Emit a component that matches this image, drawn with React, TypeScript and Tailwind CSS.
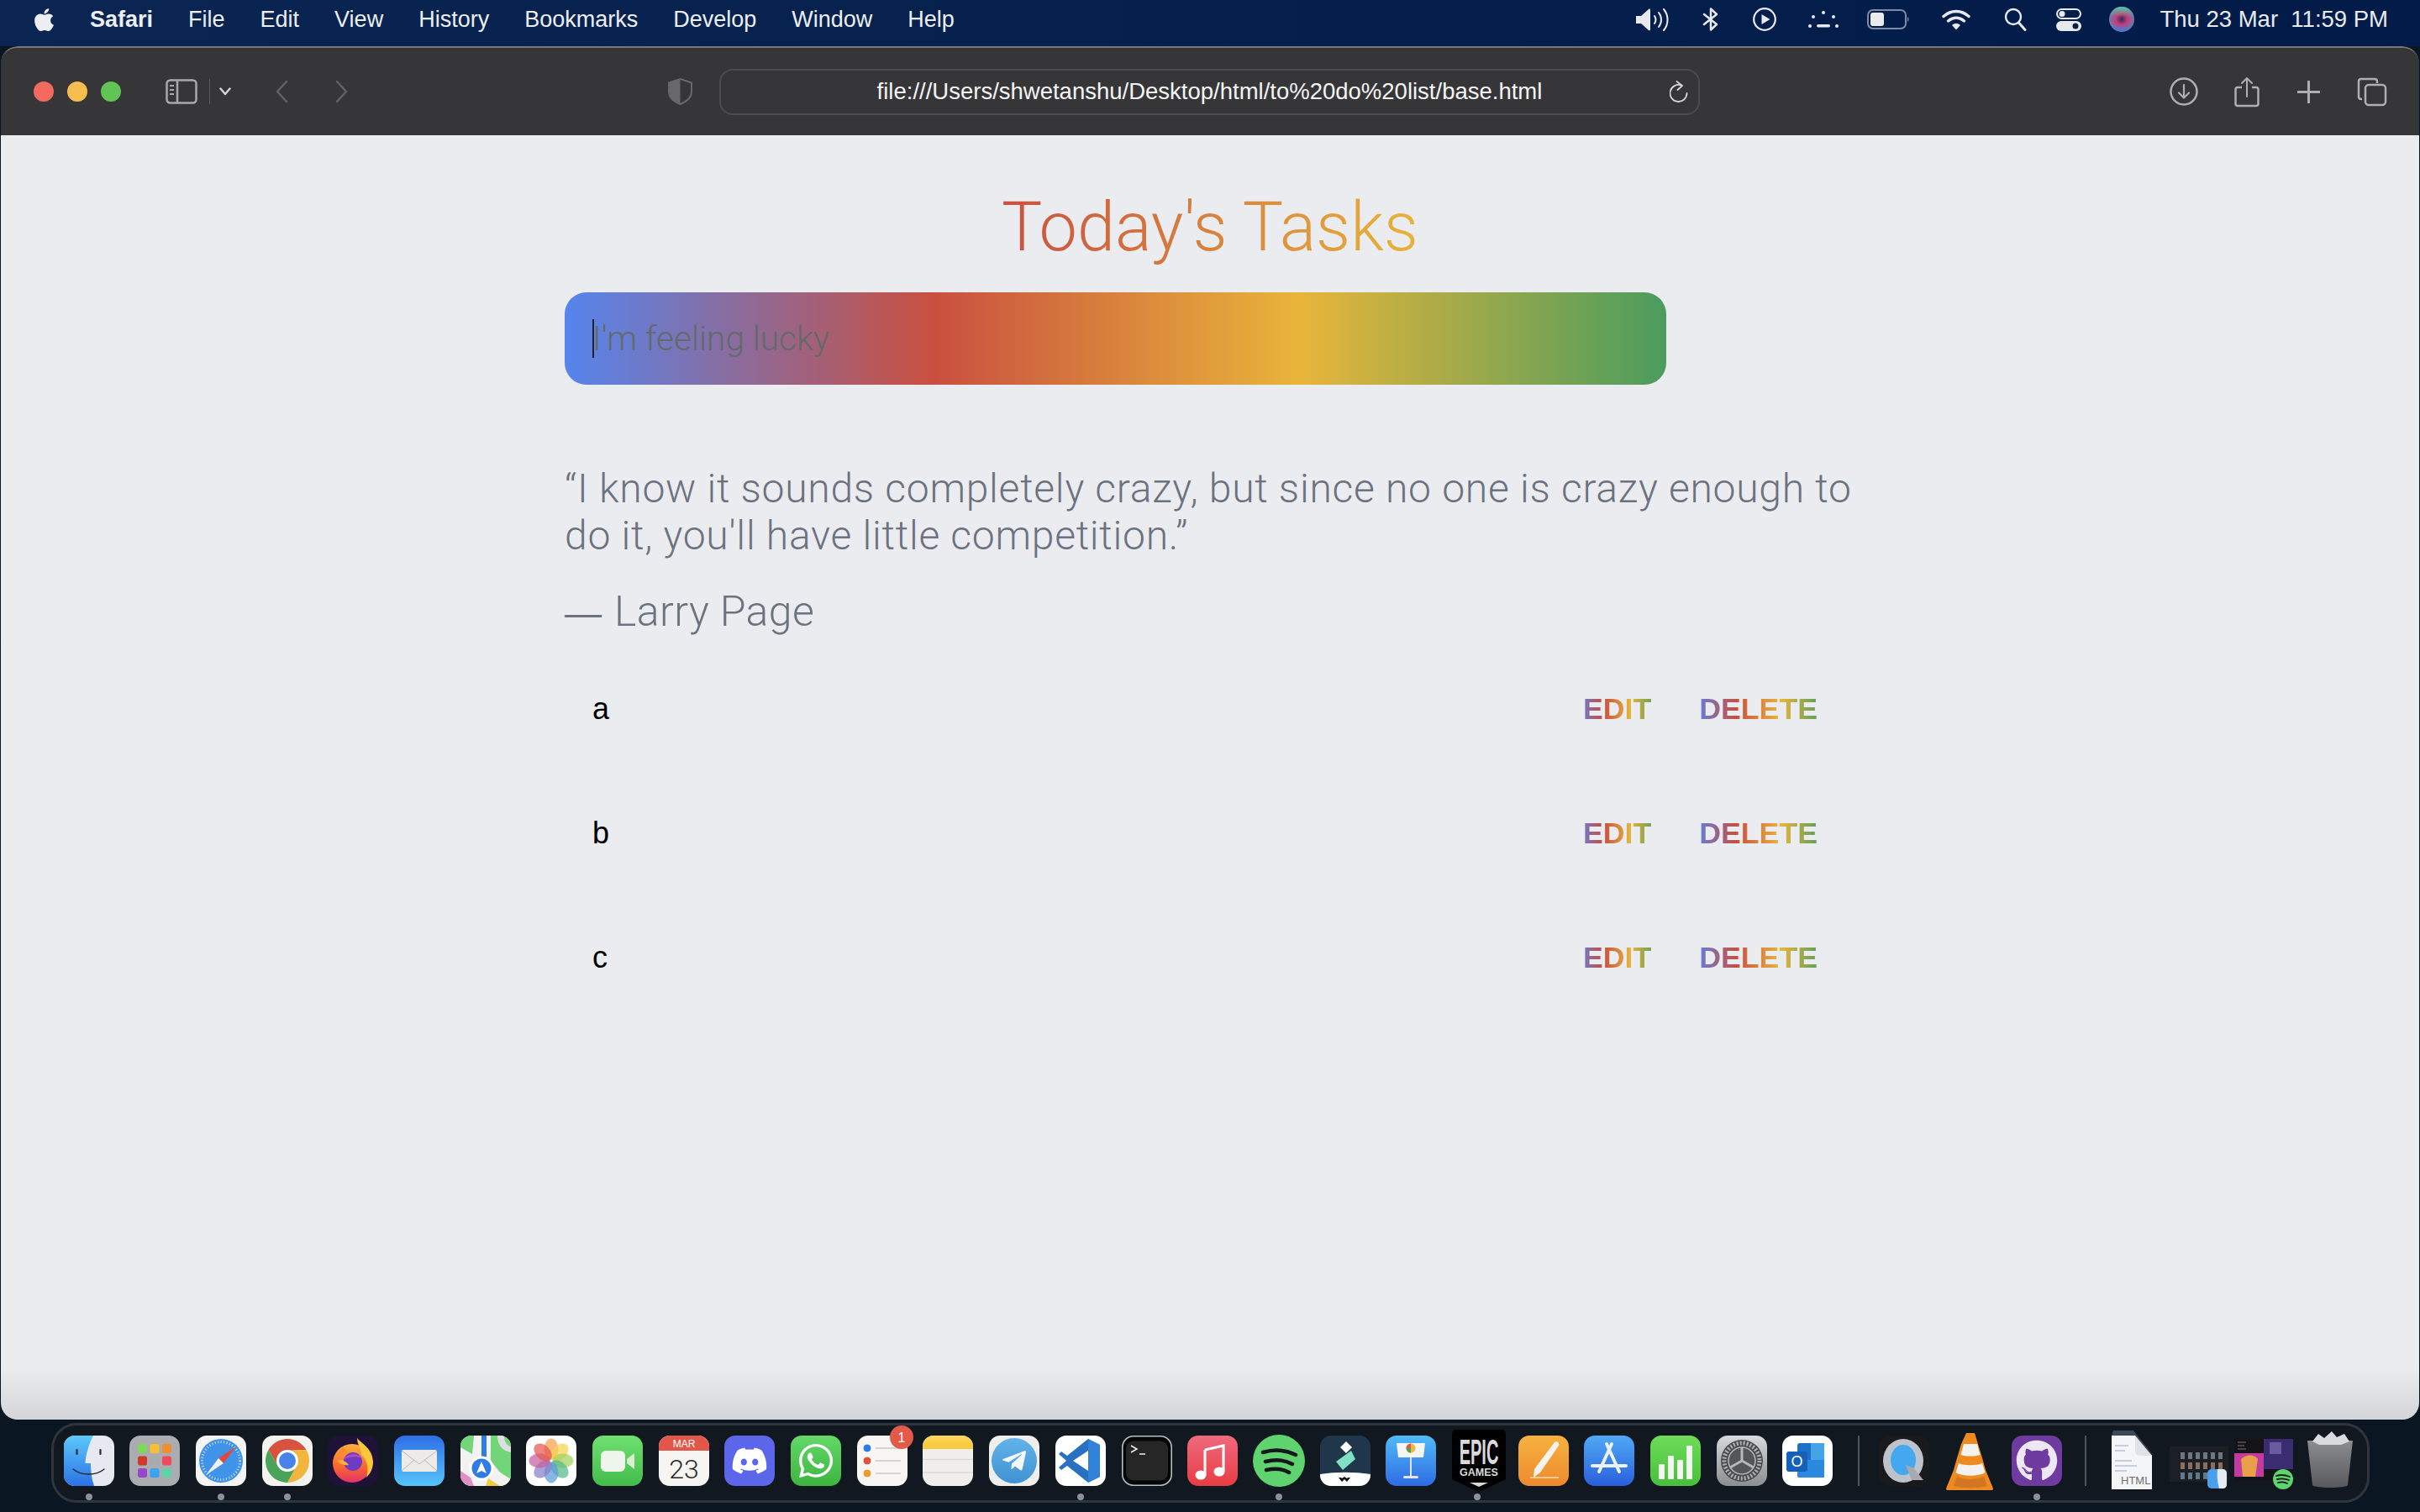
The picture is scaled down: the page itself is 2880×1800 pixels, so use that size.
import { FaApple, FaDiscord, FaGithub, FaTelegramPlane, FaWhatsapp } from "react-icons/fa";

const rainbow = "bg-[linear-gradient(to_right,#5585ee,#c94f40,#e8b53a,#4a9c5e)]";

const menuItems = ["File", "Edit", "View", "History", "Bookmarks", "Develop", "Window", "Help"];
const tasks = ["a", "b", "c"];

function StatusIcons() {
  return (
    <div className="flex items-center text-[#e8eaee]">
      <svg width="39" height="27" viewBox="0 0 39 27" className="mr-[40px]">
        <path d="M0 9h6l9-8c1-1 2 0 2 1v23c0 1-1 2-2 1l-9-8H0z" fill="#e8eaee" />
        <path d="M22 9c2 3 2 6 0 9M27 5c4 5 4 12 0 17M33 1c6 7 6 18 0 25" fill="none" stroke="#e8eaee" strokeWidth="2" strokeLinecap="round" />
      </svg>
      <svg width="19" height="28" viewBox="0 0 19 28" className="mr-[41px]">
        <path d="M2 8l15 12-7 6.500V1.500l7 6.500L2 20" fill="none" stroke="#e8eaee" strokeWidth="2.500" strokeLinecap="round" strokeLinejoin="round" />
      </svg>
      <svg width="28" height="28" viewBox="0 0 28 28" className="mr-[38px]">
        <circle cx="14" cy="14" r="12.800" fill="none" stroke="#e8eaee" strokeWidth="2.200" />
        <path d="M10.500 8l10 6-10 6z" fill="#e8eaee" />
      </svg>
      <svg width="36" height="20" viewBox="0 0 36 20" className="mr-[34px]">
        <circle cx="18" cy="2" r="2" fill="#e8eaee" />
        <circle cx="6" cy="7" r="2" fill="#e8eaee" />
        <circle cx="30" cy="7" r="2" fill="#e8eaee" />
        <circle cx="2" cy="18" r="2" fill="#e8eaee" />
        <circle cx="34" cy="18" r="2" fill="#e8eaee" />
        <rect x="10" y="16" width="16" height="3.500" rx="1.700" fill="#e8eaee" />
      </svg>
      <svg width="50" height="24" viewBox="0 0 50 24" className="mr-[39px]">
        <rect x="1" y="1" width="45" height="22" rx="6" fill="none" stroke="#7f8ba3" strokeWidth="2" />
        <rect x="4" y="4" width="16" height="16" rx="3" fill="#e8eaee" />
        <path d="M48 9c2 1 2 5 0 6z" fill="#7f8ba3" />
      </svg>
      <svg width="34" height="25" viewBox="0 0 34 25" className="mr-[40px]">
        <path d="M2 8.500c9-8 21-8 30 0M7.500 14c6-5 13-5 19 0" fill="none" stroke="#e8eaee" strokeWidth="3.400" strokeLinecap="round" />
        <path d="M12 19c3-2.600 7-2.600 10 0l-5 5.500z" fill="#e8eaee" />
      </svg>
      <svg width="27" height="28" viewBox="0 0 27 28" className="mr-[35px]">
        <circle cx="11" cy="11" r="9" fill="none" stroke="#e8eaee" strokeWidth="2.400" />
        <path d="M17.500 18l7.500 8.500" stroke="#e8eaee" strokeWidth="3" strokeLinecap="round" />
      </svg>
      <svg width="30" height="27" viewBox="0 0 30 27" className="mr-[33px]">
        <rect x="1" y="1" width="28" height="11" rx="5.500" fill="none" stroke="#e8eaee" strokeWidth="2" />
        <circle cx="7" cy="6.500" r="3.500" fill="#e8eaee" />
        <rect y="15" width="30" height="12" rx="6" fill="#e8eaee" />
        <circle cx="23" cy="21" r="3.500" fill="#0a2049" />
      </svg>
      <svg width="30" height="30" viewBox="0 0 30 30" className="mr-[30px]">
        <defs>
          <radialGradient id="siri" cx="0.5" cy="0.5" r="0.5">
            <stop offset="0" stopColor="#2c2f5e" />
            <stop offset="0.45" stopColor="#c93a78" />
            <stop offset="1" stopColor="#6b7fa8" />
          </radialGradient>
          <linearGradient id="sirib" x1="0" y1="0" x2="0" y2="1">
            <stop offset="0" stopColor="#58c9a2" stopOpacity="0.9" />
            <stop offset="0.4" stopColor="#58c9a2" stopOpacity="0" />
            <stop offset="0.7" stopColor="#3a7be0" stopOpacity="0" />
            <stop offset="1" stopColor="#3a7be0" stopOpacity="0.9" />
          </linearGradient>
        </defs>
        <circle cx="15" cy="15" r="15" fill="url(#siri)" />
        <circle cx="15" cy="15" r="15" fill="url(#sirib)" />
      </svg>
      <span className="whitespace-pre text-[27.500px] leading-none">Thu 23 Mar  11:59 PM</span>
    </div>
  );
}

function MenuBar() {
  return (
    <header className="flex h-[55px] items-center justify-between bg-linear-to-r from-[#0a2551] to-[#021b49] pb-[9px] pl-[39px] pr-[38px] text-[27px] text-[#eceef2]">
      <nav className="flex items-center">
        <FaApple className="mr-[41px] h-[31px] w-[27px] text-[#eceef2]" />
        <span className="mr-[42px] font-bold">Safari</span>
        <div className="flex gap-[42px]">
          {menuItems.map((item) => (
            <span key={item}>{item}</span>
          ))}
        </div>
      </nav>
      <StatusIcons />
    </header>
  );
}

function Toolbar() {
  return (
    <div className="flex h-[106px] items-center rounded-t-[20px] border-t-2 border-[#777779] bg-[#363638] pl-[39px]">
      <div className="flex gap-[16px]">
        <span className="size-[24px] rounded-full bg-[#f46a5e]" />
        <span className="size-[24px] rounded-full bg-[#f6be4f]" />
        <span className="size-[24px] rounded-full bg-[#61c555]" />
      </div>
      <svg width="38" height="30" viewBox="0 0 38 30" className="ml-[53px]">
        <rect x="1.500" y="1.500" width="35" height="27" rx="4" fill="none" stroke="#a9a9aa" strokeWidth="2.500" />
        <path d="M14 2v26" stroke="#a9a9aa" strokeWidth="2.500" />
        <path d="M5 8h5M5 13h5M5 18h5" stroke="#a9a9aa" strokeWidth="2" />
      </svg>
      <span className="ml-[14px] h-[30px] w-[1px] bg-[#58585a]" />
      <svg width="14" height="10" viewBox="0 0 14 10" className="ml-[11px]">
        <path d="M1.500 1.500L7 8l5.500-6.500" fill="none" stroke="#d2d2d3" strokeWidth="2.500" strokeLinecap="round" strokeLinejoin="round" />
      </svg>
      <svg width="16" height="28" viewBox="0 0 16 28" className="ml-[52px]">
        <path d="M14 2L3 14l11 12" fill="none" stroke="#626264" strokeWidth="2.500" strokeLinecap="round" strokeLinejoin="round" />
      </svg>
      <svg width="16" height="28" viewBox="0 0 16 28" className="ml-[56px]">
        <path d="M2 2l11 12L2 26" fill="none" stroke="#626264" strokeWidth="2.500" strokeLinecap="round" strokeLinejoin="round" />
      </svg>
      <svg width="29" height="32" viewBox="0 0 29 32" className="ml-[380px]">
        <path d="M14.500 1L28 5.500V16c0 7-6 12-13.500 15C7 28 1 23 1 16V5.500z" fill="none" stroke="#68686a" strokeWidth="2" />
        <path d="M14.500 1L1 5.500V16c0 7 6 12 13.500 15z" fill="#68686a" />
      </svg>
      <div className="relative ml-[32px] flex h-[55px] w-[1167px] items-center justify-center rounded-[16px] border-2 border-[#4c4c4e] text-[27.500px] text-[#f4f4f4]">
        file:///Users/shwetanshu/Desktop/html/to%20do%20list/base.html
        <svg width="22" height="26" viewBox="0 0 22 26" className="absolute right-[12px] top-[12px]">
          <path d="M20.500 15A10 10 0 1 1 14 5.600" fill="none" stroke="#d5d5d6" strokeWidth="1.800" strokeLinecap="round" />
          <path d="M8.500 1L15 6l-5.500 5" fill="none" stroke="#d5d5d6" strokeWidth="1.800" strokeLinecap="round" strokeLinejoin="round" />
        </svg>
      </div>
      <svg width="34" height="34" viewBox="0 0 34 34" className="ml-[559px]">
        <circle cx="17" cy="17" r="15.500" fill="none" stroke="#afafb0" strokeWidth="2.500" />
        <path d="M17 9v15M11 18.500l6 6 6-6" fill="none" stroke="#afafb0" strokeWidth="2.200" strokeLinecap="round" strokeLinejoin="round" />
      </svg>
      <svg width="30" height="37" viewBox="0 0 30 37" className="ml-[43px]">
        <path d="M9 13H4c-1.500 0-2.500 1-2.500 2.500v17c0 1.500 1 2.500 2.500 2.500h22c1.500 0 2.500-1 2.500-2.500v-17c0-1.500-1-2.500-2.500-2.500h-5" fill="none" stroke="#afafb0" strokeWidth="2.500" />
        <path d="M15 24V2M9 8l6-6 6 6" fill="none" stroke="#afafb0" strokeWidth="2" strokeLinecap="round" strokeLinejoin="round" />
      </svg>
      <svg width="27" height="27" viewBox="0 0 27 27" className="ml-[45px]">
        <path d="M13.500 1v25M1 13.500h25" stroke="#afafb0" strokeWidth="3" strokeLinecap="round" />
      </svg>
      <svg width="36" height="35" viewBox="0 0 36 35" className="ml-[44px]">
        <path d="M6 26H5c-2 0-3-1-3-3V5c0-2 1-3 3-3h16c2 0 3 1 3 3v2" fill="none" stroke="#afafb0" strokeWidth="2.500" />
        <rect x="10" y="9" width="24" height="24" rx="4" fill="none" stroke="#afafb0" strokeWidth="2.500" />
      </svg>
    </div>
  );
}

function TaskRow({ label }: { label: string }) {
  return (
    <li className="flex h-[148px] items-center justify-between pl-[33px] pr-[37px]">
      <span className="text-[36px] leading-none text-black">{label}</span>
      <div className="flex gap-[41px] pt-[2px] text-[35.700px] font-bold">
        <button className={`${rainbow} bg-clip-text px-2 text-transparent`}>EDIT</button>
        <button className={`${rainbow} bg-clip-text px-2 text-transparent`}>DELETE</button>
      </div>
    </li>
  );
}

function TodoPage() {
  return (
    <main className="flex-1 bg-linear-to-b from-[#ebecf0] via-[#ebecf0] via-[96%] to-[#d4d5d8] pt-[61px]">
      <div className="mx-auto w-[1536px]">
        <h1 className={`${rainbow} bg-clip-text text-center font-['Roboto',sans-serif] text-[81px] font-light leading-[97px] text-transparent`}>
          Today's Tasks
        </h1>
        <div className="relative mt-[29px] w-[1311px]">
          <input
            readOnly
            placeholder="I'm feeling lucky"
            className={`${rainbow} h-[110px] w-full rounded-[26px] pl-[33px] font-['Roboto',sans-serif] text-[40.500px] font-light outline-none placeholder:text-[#626a6c]`}
          />
          <span className="absolute left-[33px] top-[32px] h-[46px] w-[2px] bg-[#20242a]" />
        </div>
        <blockquote className="mt-[96px] font-['Roboto',sans-serif] font-light text-[#6b7280]">
          <p className="text-[48px] leading-[56px] tracking-[0.730px]">
            “I know it sounds completely crazy, but since no one is crazy enough to
            <br />
            do it, you'll have little competition.”
          </p>
          <p className="mt-[34px] text-[50px] leading-[56px] tracking-[0.400px]">
            <span className="mr-[2px] font-['Liberation_Sans',sans-serif] text-[44px] font-normal">—</span> Larry Page
          </p>
        </blockquote>
        <ul className="mt-[12px]">
          {tasks.map((task) => (
            <TaskRow key={task} label={task} />
          ))}
        </ul>
      </div>
    </main>
  );
}

function AppTile({ children, dot, className = "w-[60px]" }: { children: React.ReactNode; dot?: boolean; className?: string }) {
  return (
    <div className={`relative h-[60px] shrink-0 ${className}`}>
      {children}
      {dot && <span className="absolute -bottom-[17px] left-1/2 size-[8px] -translate-x-1/2 rounded-full bg-[#8b909a]" />}
    </div>
  );
}

function Finder() {
  return (
    <svg viewBox="0 0 60 60" className="size-full">
      <defs>
        <linearGradient id="fb" x1="0" y1="0" x2="0" y2="1"><stop offset="0" stopColor="#5cc8fb" /><stop offset="1" stopColor="#2b72e6" /></linearGradient>
        <clipPath id="fc"><rect width="60" height="60" rx="13" /></clipPath>
      </defs>
      <g clipPath="url(#fc)">
        <rect width="60" height="60" fill="#e6e9ef" />
        <path d="M0 0h35c-5 10-9 22-9.500 33H32c0 9 1 19 4 27H0z" fill="url(#fb)" />
      </g>
      <path d="M15.500 17v5M43.500 17v5" stroke="#2a2a2e" strokeWidth="2.200" strokeLinecap="round" />
      <path d="M11 40c10 8 27 8 37 0" fill="none" stroke="#232428" strokeWidth="1.500" strokeLinecap="round" />
    </svg>
  );
}

function Launchpad() {
  const cells = ["#7ed957", "#f9bf34", "#ee8f2c", "#cf3a2a", "#a7abad", "#ef4b60", "#9648c8", "#3aa4f0", "#5fd3a8"];
  return (
    <svg viewBox="0 0 60 60" className="size-full">
      <rect width="60" height="60" rx="13" fill="#aaacaf" />
      {cells.map((c, i) => (
        <rect key={c} x={10 + (i % 3) * 14.500} y={10 + Math.floor(i / 3) * 14.500} width="11" height="11" rx="2.500" fill={c} />
      ))}
    </svg>
  );
}

function Safari() {
  return (
    <svg viewBox="0 0 60 60" className="size-full">
      <rect width="60" height="60" rx="13" fill="#f4f4f4" />
      <circle cx="30" cy="30" r="26" fill="#3f93e8" />
      <circle cx="30" cy="30" r="22.500" fill="none" stroke="#cfe3f8" strokeWidth="3" strokeDasharray="1 2.500" />
      <path d="M48 13L33 33 27 27z" fill="#e4463c" />
      <path d="M12 47L27 27 33 33z" fill="#f2f2f2" />
    </svg>
  );
}

function Chrome() {
  return (
    <svg viewBox="0 0 60 60" className="size-full">
      <rect width="60" height="60" rx="13" fill="#f2f2ef" />
      <path d="M7.500 17A26 26 0 0 1 52.500 17L30 18 19 37z" fill="#d8523f" />
      <path d="M52.500 17A26 26 0 0 1 30 56L41 36 30 18z" fill="#f2b63c" />
      <path d="M30 56A26 26 0 0 1 7.500 17L19 37 41 36z" fill="#4aa35a" />
      <circle cx="30" cy="30" r="13" fill="#fff" />
      <circle cx="30" cy="30" r="10" fill="#4783e8" />
    </svg>
  );
}

function Firefox() {
  return (
    <svg viewBox="0 0 60 60" className="size-full">
      <defs>
        <linearGradient id="ff" x1="0" y1="0" x2="0" y2="1"><stop offset="0" stopColor="#ffb13c" /><stop offset="0.6" stopColor="#f8662f" /><stop offset="1" stopColor="#e6306b" /></linearGradient>
      </defs>
      <rect width="60" height="60" rx="13" fill="#1f1238" />
      <circle cx="29" cy="33" r="23" fill="url(#ff)" />
      <path d="M35 3c4 6 18 11 19 28 0 8-3 14-8 19 3-10 2-20-6-27 0-8-5-12-5-20z" fill="#fcc63d" />
      <path d="M10 22c3-4 7-5 8-9 2 3 3 5 6 6-5 1-8 4-14 3z" fill="#fb8b2f" />
      <circle cx="30" cy="31" r="11" fill="#6d3bc2" />
      <path d="M19 28c5-7 17-8 22-1-7-3-15-2-22 1z" fill="#b14bc0" />
      <path d="M11 30c6-2 11 1 14 5-5 1-10-1-14-5z" fill="#ffb13c" />
    </svg>
  );
}

function Mail() {
  return (
    <svg viewBox="0 0 60 60" className="size-full">
      <defs>
        <linearGradient id="ml" x1="0" y1="0" x2="0" y2="1"><stop offset="0" stopColor="#2f6ee6" /><stop offset="1" stopColor="#56c5fb" /></linearGradient>
      </defs>
      <rect width="60" height="60" rx="13" fill="url(#ml)" />
      <rect x="9" y="17" width="42" height="26" rx="2" fill="#ecebe8" />
      <path d="M9 18l21 16 21-16M9 42l15-13M51 42L36 29" fill="none" stroke="#b9b8b6" strokeWidth="1" />
    </svg>
  );
}

function Maps() {
  return (
    <svg viewBox="0 0 60 60" className="size-full">
      <defs>
        <clipPath id="mp"><rect width="60" height="60" rx="13" /></clipPath>
      </defs>
      <g clipPath="url(#mp)">
        <rect width="60" height="60" fill="#f2f2f0" />
        <path d="M0 0h16L14 22 0 14z" fill="#72d57a" />
        <path d="M36 0h24v60L36 30z" fill="#72d57a" />
        <path d="M44 0c0 12 6 18 16 20v-7c-5-1-8-6-8-13z" fill="#dedfe0" />
        <path d="M22 28l38 24v8H36L20 44z" fill="#f2f2f0" />
        <path d="M0 42l12 8 4 10H0z" fill="#df90c4" />
        <path d="M30 60l3-9 14 9z" fill="#f4cb3f" />
        <path d="M25 0h6v30h-6z" fill="#2f7be8" />
      </g>
      <circle cx="25" cy="39" r="14.500" fill="#fff" />
      <circle cx="25" cy="39" r="11.500" fill="#2f7be8" />
      <path d="M25 31l6 14-6-3-6 3z" fill="#fff" />
    </svg>
  );
}

function Photos() {
  const petals = ["#f4a24b", "#f5d34e", "#a4d15d", "#58b98a", "#5a9bd8", "#8a7ec8", "#c45f9c", "#e6564f"];
  return (
    <svg viewBox="0 0 60 60" className="size-full">
      <rect width="60" height="60" rx="13" fill="#fff" />
      {petals.map((c, i) => (
        <ellipse key={c} cx="30" cy="16" rx="8.500" ry="12.500" fill={c} opacity="0.72" transform={`rotate(${i * 45} 30 30)`} />
      ))}
    </svg>
  );
}

function FaceTime() {
  return (
    <svg viewBox="0 0 60 60" className="size-full">
      <defs>
        <linearGradient id="ft" x1="0" y1="0" x2="0" y2="1"><stop offset="0" stopColor="#6fe06f" /><stop offset="1" stopColor="#42bc4c" /></linearGradient>
      </defs>
      <rect width="60" height="60" rx="13" fill="url(#ft)" />
      <rect x="10" y="18" width="29" height="25" rx="6" fill="#eef5ea" />
      <path d="M41 28l9-7v19l-9-7z" fill="#d8efd0" />
    </svg>
  );
}

function Calendar() {
  return (
    <svg viewBox="0 0 60 60" className="size-full">
      <defs>
        <clipPath id="cl"><rect width="60" height="60" rx="13" /></clipPath>
      </defs>
      <g clipPath="url(#cl)">
        <rect width="60" height="60" fill="#f6f5f2" />
        <rect width="60" height="18" fill="#e3574b" />
      </g>
      <text x="30" y="14" textAnchor="middle" fontSize="12" fill="#fff" fontFamily="'Liberation Sans',sans-serif">MAR</text>
      <text x="30" y="51" textAnchor="middle" fontSize="32" fill="#2a2a2a" fontFamily="'Roboto',sans-serif" fontWeight="300">23</text>
    </svg>
  );
}

function Reminders() {
  return (
    <svg viewBox="0 0 60 60" className="size-full overflow-visible">
      <rect width="60" height="60" rx="13" fill="#f7f6f3" />
      <circle cx="12" cy="15" r="5" fill="#2f7be8" stroke="#fff" />
      <circle cx="12" cy="30" r="5" fill="#e0503f" stroke="#fff" />
      <circle cx="12" cy="45" r="5" fill="#ee9a2f" stroke="#fff" />
      <path d="M22 15h30M22 30h30M22 45h30" stroke="#c9c9c7" strokeWidth="1.500" />
      <circle cx="53" cy="2" r="14" fill="#e45a48" />
      <text x="53" y="8" textAnchor="middle" fontSize="16" fill="#fff" fontFamily="'Liberation Sans',sans-serif">1</text>
    </svg>
  );
}

function Notes() {
  return (
    <svg viewBox="0 0 60 60" className="size-full">
      <defs>
        <clipPath id="nt"><rect width="60" height="60" rx="13" /></clipPath>
        <linearGradient id="ny" x1="0" y1="0" x2="0" y2="1"><stop offset="0" stopColor="#fcd75c" /><stop offset="1" stopColor="#f8c63a" /></linearGradient>
      </defs>
      <g clipPath="url(#nt)">
        <rect width="60" height="60" fill="#f0eeea" />
        <rect width="60" height="16" fill="url(#ny)" />
        <path d="M0 28.500h60M0 44h60" stroke="#dcdad5" strokeWidth="1.500" />
      </g>
    </svg>
  );
}

function Telegram() {
  return (
    <div className="relative size-full rounded-[13px] bg-[#eeeeec]">
      <span className="absolute inset-[3px] flex items-center justify-center rounded-full bg-linear-to-b from-[#63b3ea] to-[#3f92d2]">
        <FaTelegramPlane className="size-[32px] text-[#f4f7fa]" />
      </span>
    </div>
  );
}

function VsCode() {
  return (
    <svg viewBox="0 0 60 60" className="size-full">
      <rect width="60" height="60" rx="13" fill="#fff" />
      <path d="M39 4l14 7v38l-14 7-25-20-7 5-3-3 9-8-9-8 3-3 7 5z" fill="#2a70c0" />
      <path d="M39 18L21 30l18 12z" fill="#fff" />
      <path d="M39 4l14 7v38l-14 7z" fill="#2f82d8" />
    </svg>
  );
}

function Terminal() {
  return (
    <svg viewBox="0 0 60 60" className="size-full">
      <rect x="0.800" y="0.800" width="58.400" height="58.400" rx="13" fill="#050505" stroke="#b5c0c4" strokeWidth="1.600" />
      <rect x="5" y="6.500" width="50" height="47" rx="9" fill="#262626" />
      <path d="M11 12l7 4-7 4" fill="none" stroke="#f2f2f2" strokeWidth="1.500" />
      <path d="M21 22h7" stroke="#f2f2f2" strokeWidth="1.500" />
    </svg>
  );
}

function Music() {
  return (
    <svg viewBox="0 0 60 60" className="size-full">
      <defs>
        <linearGradient id="ms" x1="0" y1="0" x2="0" y2="1"><stop offset="0" stopColor="#ef6a7e" /><stop offset="1" stopColor="#e83c44" /></linearGradient>
      </defs>
      <rect width="60" height="60" rx="13" fill="url(#ms)" />
      <path d="M21 17l22-5v31" fill="none" stroke="#fff" strokeWidth="3" />
      <path d="M21 17v30" stroke="#fff" strokeWidth="3" />
      <ellipse cx="16" cy="47" rx="6.500" ry="5.500" fill="#fff" />
      <ellipse cx="38" cy="43" rx="6.500" ry="5.500" fill="#fff" />
    </svg>
  );
}

function Spotify() {
  return (
    <svg viewBox="0 0 60 60" className="size-full overflow-visible">
      <circle cx="30" cy="30" r="31" fill="#5fd36d" />
      <path d="M11 20c13-4 27-3 39 3M14 31c11-3 23-2 32 3M15 41c9-2 19-2 27 3" fill="none" stroke="#14181c" strokeWidth="4.500" strokeLinecap="round" />
    </svg>
  );
}

function Filmora() {
  return (
    <svg viewBox="0 0 60 60" className="size-full">
      <defs>
        <clipPath id="fm"><rect width="60" height="60" rx="13" /></clipPath>
      </defs>
      <g clipPath="url(#fm)">
        <rect width="60" height="60" fill="#20364a" />
        <path d="M0 46c20-3 40-3 60 0v14H0z" fill="#fff" />
      </g>
      <path d="M24 14l7-7 7 7-7 7z" fill="#fff" />
      <path d="M19 31l18-13 5 10-15 13z" fill="#7fe0c4" />
      <path d="M22 50l4 5 3-3 3 3 4-5-3 0-1 1-3-2-3 2-1-1z" fill="#111" />
    </svg>
  );
}

function Keynote() {
  return (
    <svg viewBox="0 0 60 60" className="size-full">
      <defs>
        <linearGradient id="kn" x1="0" y1="0" x2="0" y2="1"><stop offset="0" stopColor="#52baf8" /><stop offset="1" stopColor="#2d6ce4" /></linearGradient>
      </defs>
      <rect width="60" height="60" rx="13" fill="url(#kn)" />
      <path d="M13 9h34l-2 17H15z" fill="#f5f5f3" />
      <path d="M29 26h2v23h-2z" fill="#e4e6ea" />
      <rect x="21" y="48" width="18" height="3" rx="1.500" fill="#e4e6ea" />
      <circle cx="30" cy="15" r="5.500" fill="#f0b53c" />
      <path d="M30 15V9.500a5.500 5.500 0 0 0-5.500 5.500z" fill="#e2574c" />
      <path d="M30 15h-5.500a5.500 5.500 0 0 0 5.500 5.500z" fill="#4aa35a" />
    </svg>
  );
}

function Epic() {
  return (
    <svg viewBox="0 0 64 74" className="absolute -top-[7px] left-0 h-[74px] w-[64px]">
      <path d="M5 0h54c3 0 5 2 5 5v54L32 74 0 59V5c0-3 2-5 5-5z" fill="#000" />
      <text transform="translate(32 41) scale(1 2.100)" textAnchor="middle" fontSize="20" fontWeight="700" fill="#dadada" fontFamily="'Liberation Sans',sans-serif">EPIC</text>
      <text x="32" y="55" textAnchor="middle" fontSize="12.500" fontWeight="700" fill="#dadada" fontFamily="'Liberation Sans',sans-serif">GAMES</text>
      <path d="M21 63h22l-11 5z" fill="#dadada" />
    </svg>
  );
}

function Pages() {
  return (
    <svg viewBox="0 0 60 60" className="size-full">
      <defs>
        <linearGradient id="pg" x1="0" y1="0" x2="0" y2="1"><stop offset="0" stopColor="#f6b23f" /><stop offset="1" stopColor="#ee8a2f" /></linearGradient>
      </defs>
      <rect width="60" height="60" rx="13" fill="url(#pg)" />
      <path d="M43 8c3-2 6 0 5 4L26 44l-8 6 1-10z" fill="#f6f3ee" />
      <path d="M14 50h34" stroke="#f8d9a9" strokeWidth="1.500" />
    </svg>
  );
}

function AppStore() {
  return (
    <svg viewBox="0 0 60 60" className="size-full">
      <defs>
        <linearGradient id="as" x1="0" y1="0" x2="0" y2="1"><stop offset="0" stopColor="#4fa9f5" /><stop offset="1" stopColor="#2a5fdc" /></linearGradient>
      </defs>
      <rect width="60" height="60" rx="13" fill="url(#as)" />
      <path d="M33 10l-15 33M27 10l15 33M10 36h40" stroke="#eaf2fb" strokeWidth="4" strokeLinecap="round" />
    </svg>
  );
}

function Numbers() {
  return (
    <svg viewBox="0 0 60 60" className="size-full">
      <defs>
        <linearGradient id="nb" x1="0" y1="0" x2="0" y2="1"><stop offset="0" stopColor="#6fdc58" /><stop offset="1" stopColor="#47bf3c" /></linearGradient>
      </defs>
      <rect width="60" height="60" rx="13" fill="url(#nb)" />
      <rect x="10" y="34" width="7" height="18" rx="1" fill="#f2f7ef" />
      <rect x="21" y="24" width="7" height="28" rx="1" fill="#f2f7ef" />
      <rect x="32" y="29" width="7" height="23" rx="1" fill="#f2f7ef" />
      <rect x="43" y="12" width="7" height="40" rx="1" fill="#f2f7ef" />
    </svg>
  );
}

function Settings() {
  return (
    <svg viewBox="0 0 60 60" className="size-full">
      <defs>
        <linearGradient id="st" x1="0" y1="0" x2="0" y2="1"><stop offset="0" stopColor="#d6dadc" /><stop offset="1" stopColor="#8b8d8f" /></linearGradient>
      </defs>
      <rect width="60" height="60" rx="13" fill="url(#st)" />
      <circle cx="30" cy="30" r="25" fill="#4a4b4d" />
      <circle cx="30" cy="30" r="21" fill="none" stroke="#aeb0b2" strokeWidth="5" strokeDasharray="2 2" />
      <circle cx="30" cy="30" r="16" fill="#55565a" stroke="#b6b8ba" strokeWidth="1.500" />
      <path d="M30 30V14M30 30L16 38M30 30l14 8" stroke="#b6b8ba" strokeWidth="3" />
    </svg>
  );
}

function Outlook() {
  return (
    <svg viewBox="0 0 60 60" className="size-full">
      <rect width="60" height="60" rx="13" fill="#fff" />
      <rect x="18" y="9" width="32" height="41" rx="3" fill="#1e70c8" />
      <path d="M34 9h16v20H34z" fill="#45a3e8" />
      <path d="M18 29h32v21H21c-2 0-3-1-3-3z" fill="#2a8adf" />
      <rect x="5" y="19" width="25" height="24" rx="3" fill="#1560b8" />
      <text x="17.500" y="37" textAnchor="middle" fontSize="18" fill="#fff" fontFamily="'Liberation Sans',sans-serif">O</text>
    </svg>
  );
}

function QuickTime() {
  return (
    <svg viewBox="0 0 60 60" className="size-full">
      <rect width="60" height="60" rx="13" fill="#1a1a1d" />
      <ellipse cx="29" cy="30" rx="24" ry="26" fill="#bcc3cb" />
      <ellipse cx="29" cy="29" rx="15" ry="18" fill="#44a8ee" />
      <path d="M32 35l10 4 11 14H39z" fill="#a7abb0" />
    </svg>
  );
}

function Vlc() {
  return (
    <svg viewBox="0 0 60 68" className="absolute -top-[3px] left-0 h-[68px] w-[60px]">
      <path d="M25 0h10l4 13 6 20 3 11 9 22c0 1 0 2-2 2H3c-2 0-2-1-2-2l9-22 3-11 6-20z" fill="#ee8a1f" />
      <path d="M22 13h16l3.500 13c-6 2-17 2-23 0z" fill="#f2f2f0" />
      <path d="M16 36c7 3 21 3 28 0l3.500 11c-8 5-27 5-35 0z" fill="#f2f2f0" />
      <path d="M14 52c8 4 24 4 32 0l4 11c-11 3-29 3-40 0z" fill="#d27624" />
    </svg>
  );
}

function HtmlDoc() {
  return (
    <svg viewBox="0 0 48 70" className="absolute -top-[6px] left-0 h-[70px] w-[48px]">
      <path d="M0 6h28l20 24v40H0z" fill="#f4f5f7" />
      <path d="M2 0h24l22 28h-4L28 6H0z" fill="#3c4a58" />
      <path d="M28 6v18c0 3 2 6 6 6h14z" fill="#dfe2e6" />
      <path d="M4 18h16M4 24h12M4 36h20M4 42h26M4 48h14" stroke="#9aa6c8" strokeWidth="1" />
      <text x="11" y="64" fontSize="13" fill="#6d7074" fontFamily="'Liberation Sans',sans-serif">HTML</text>
    </svg>
  );
}

function FolderStack() {
  return (
    <svg viewBox="0 0 70 50" className="absolute top-[13px] left-0 h-[50px] w-[70px]">
      <rect width="70" height="42" fill="#1c1f24" />
      {[0, 1, 2, 3, 4, 5].map((i) => (
        <g key={i}>
          <rect x={13 + i * 9} y="7" width="5" height="8" fill="#6f7680" />
          <rect x={13 + i * 9} y="19" width="5" height="8" fill="#8a6f60" />
          <rect x={13 + i * 9} y="31" width="5" height="8" fill="#5f7a88" />
        </g>
      ))}
      <rect x="45" y="27" width="23" height="23" rx="5" fill="#4aa0ee" />
      <path d="M57 27h6c3 0 5 2 5 5v13c0 3-2 5-5 5h-4c-2-7-3-15-2-23z" fill="#e6e9ef" />
    </svg>
  );
}

function SpotifyStack() {
  return (
    <svg viewBox="0 0 71 60" className="absolute top-[4px] left-0 h-[60px] w-[71px]">
      <rect width="70" height="50" fill="#151318" />
      <rect x="35" width="35" height="36" fill="#3a2c70" />
      <rect x="42" y="4" width="14" height="14" fill="#6a5aa0" />
      <path d="M4 4h10M4 8h8M4 12h10" stroke="#777" strokeWidth="1" />
      <rect y="17" width="35" height="28" fill="#c33aa0" />
      <path d="M8 24c6-6 16-6 20 0l-3 21H10z" fill="#e8a04a" />
      <circle cx="58" cy="48" r="12" fill="#5fd36d" />
      <path d="M50 44c6-2 11-1 16 1M51 48c5-1 9-1 14 1M52 52c4-1 8-1 11 1" fill="none" stroke="#14181c" strokeWidth="1.800" strokeLinecap="round" />
    </svg>
  );
}

function Trash() {
  return (
    <svg viewBox="0 0 54 69" className="absolute -top-[6px] left-0 h-[69px] w-[54px]">
      <defs>
        <linearGradient id="tr" x1="0" y1="0" x2="0" y2="1"><stop offset="0" stopColor="#8b8d90" /><stop offset="1" stopColor="#57595c" /></linearGradient>
      </defs>
      <path d="M0 12h54l-6 53c-1 4-41 4-42 0z" fill="url(#tr)" />
      <path d="M6 13l7-9 7 5 9-8 6 7 9-4 6 9-10 4H14z" fill="#d9dbde" />
    </svg>
  );
}

function Dock() {
  return (
    <footer className="mx-auto mt-[4px] flex h-[95px] w-[2759px] items-start rounded-[30px] border-[3px] border-[#2f353c] bg-[#12181f] pl-[12px] pt-[12px]">
      <div className="flex gap-[18.700px]">
        <AppTile dot><Finder /></AppTile>
        <AppTile><Launchpad /></AppTile>
        <AppTile dot><Safari /></AppTile>
        <AppTile dot><Chrome /></AppTile>
        <AppTile><Firefox /></AppTile>
        <AppTile><Mail /></AppTile>
        <AppTile><Maps /></AppTile>
        <AppTile><Photos /></AppTile>
        <AppTile><FaceTime /></AppTile>
        <AppTile><Calendar /></AppTile>
        <AppTile>
          <div className="flex size-full items-center justify-center rounded-[13px] bg-[#5b66ea]">
            <FaDiscord className="size-[44px] text-white" />
          </div>
        </AppTile>
        <AppTile>
          <div className="flex size-full items-center justify-center rounded-[13px] bg-linear-to-b from-[#62d968] to-[#3cb53f]">
            <FaWhatsapp className="size-[46px] text-white" />
          </div>
        </AppTile>
        <AppTile><Reminders /></AppTile>
        <AppTile><Notes /></AppTile>
        <AppTile><Telegram /></AppTile>
        <AppTile dot><VsCode /></AppTile>
        <AppTile><Terminal /></AppTile>
        <AppTile><Music /></AppTile>
        <AppTile dot><Spotify /></AppTile>
        <AppTile><Filmora /></AppTile>
        <AppTile><Keynote /></AppTile>
        <AppTile dot><Epic /></AppTile>
        <AppTile><Pages /></AppTile>
        <AppTile><AppStore /></AppTile>
        <AppTile><Numbers /></AppTile>
        <AppTile><Settings /></AppTile>
        <AppTile><Outlook /></AppTile>
      </div>
      <span className="ml-[30px] h-[60px] w-[2px] bg-[#4d535a]" />
      <div className="ml-[23px] flex gap-[19px]">
        <AppTile><QuickTime /></AppTile>
        <AppTile><Vlc /></AppTile>
        <AppTile dot>
          <div className="flex size-full items-center justify-center rounded-[13px] bg-[#6f3ba0]">
            <FaGithub className="size-[50px] text-[#eee8f4]" />
          </div>
        </AppTile>
      </div>
      <span className="ml-[27px] h-[60px] w-[2px] bg-[#4d535a]" />
      <div className="ml-[30px] flex">
        <AppTile className="w-[48px]"><HtmlDoc /></AppTile>
        <AppTile className="ml-[21px] w-[70px]"><FolderStack /></AppTile>
        <AppTile className="ml-[7px] w-[71px]"><SpotifyStack /></AppTile>
        <AppTile className="ml-[16px] w-[54px]"><Trash /></AppTile>
      </div>
    </footer>
  );
}

export default function App() {
  return (
    <div className="flex h-[1800px] w-[2880px] flex-col overflow-hidden bg-[#0a1622] font-['Liberation_Sans',sans-serif]">
      <MenuBar />
      <section className="mx-[1px] flex h-[1635px] flex-col overflow-hidden rounded-[20px]">
        <Toolbar />
        <TodoPage />
      </section>
      <Dock />
    </div>
  );
}
